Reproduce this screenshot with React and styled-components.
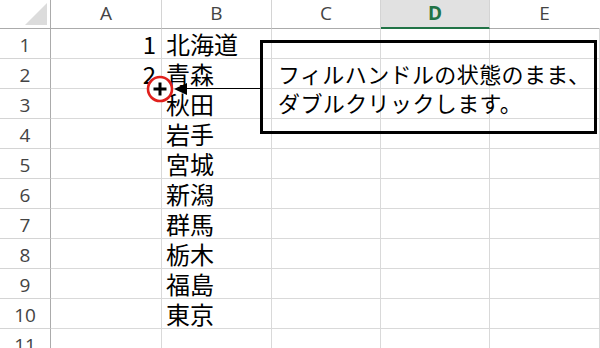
import React from 'react'
import styled, { createGlobalStyle } from 'styled-components'

const GlobalStyle = createGlobalStyle`
    html, body {
        margin: 0;
        padding: 0;
        background: #fff;
        overflow: hidden;
    }
`;

const Sheet = styled.div`
    position: relative;
    width: 600px;
    height: 348px;
    overflow: hidden;
    background: #fff;
    font-family: "Noto Sans CJK JP", sans-serif;
`;

const Grid = styled.div`
    display: grid;
    grid-template-columns: 51px 111px 110px 109px 109px 110px;
    grid-template-rows: 29px repeat(11, 30px);
`;

const Cell = styled.div`
    box-sizing: border-box;
    border-right: 1px solid #d9d9d9;
    border-bottom: 1px solid #d9d9d9;
    display: flex;
    align-items: flex-end;
    justify-content: ${p => (p.$right ? 'flex-end' : 'flex-start')};
    padding: 0 5px 0 4px;
    font-size: 24px;
    line-height: 29px;
    color: #000;
    white-space: nowrap;
    overflow: visible;
`;

const Corner = styled.div`
    position: relative;
    box-sizing: border-box;
    border-right: 1px solid #ababab;
    border-bottom: 1px solid #ababab;
    &:after {
        content: '';
        position: absolute;
        right: 3px;
        bottom: 3px;
        width: 0;
        height: 0;
        border-left: 22px solid transparent;
        border-bottom: 22px solid #dcdcdc;
    }
`;

const ColHead = styled.div`
    box-sizing: border-box;
    display: flex;
    align-items: center;
    justify-content: center;
    font-family: "Open Sans", "Liberation Sans", sans-serif;
    font-size: 19px;
    padding-bottom: 2px;
    background: ${p => (p.$active ? '#e1e1e1' : '#fff')};
    color: ${p => (p.$active ? '#217346' : '#444')};
    font-weight: ${p => (p.$active ? 700 : 400)};
    border-right: 1px solid ${p => (p.$last ? 'transparent' : '#d4d4d4')};
    border-bottom: ${p => (p.$active ? '2px solid #217346' : '1px solid #ababab')};
`;

const RowHead = styled.div`
    box-sizing: border-box;
    display: flex;
    align-items: center;
    justify-content: center;
    font-family: "Open Sans", "Liberation Sans", sans-serif;
    font-size: 19px;
    color: #444;
    padding-top: 2px;
    border-right: 1px solid #ababab;
    border-bottom: 1px solid #d4d4d4;
`;

const Callout = styled.div`
    position: absolute;
    left: 260px;
    top: 40px;
    width: 337px;
    height: 94px;
    box-sizing: border-box;
    border: 3px solid #000;
    padding: 16px 0 0 15px;
    font-size: 22px;
    line-height: 29px;
    color: #000;
    letter-spacing: 0.4px;
    white-space: nowrap;
`;

const Pointer = styled.svg`
    position: absolute;
    left: 140px;
    top: 70px;
    width: 122px;
    height: 40px;
    overflow: visible;
`;

const columns = ['A', 'B', 'C', 'D', 'E'];

const prefectures = [
    '北海道', '青森', '秋田', '岩手', '宮城',
    '新潟', '群馬', '栃木', '福島', '東京'
];

const rows = prefectures.map((name, i) => ({
    num: i + 1,
    a: i < 2 ? String(i + 1) : '',
    b: name
}));

const App = () => (
    <Sheet>
        <GlobalStyle />
        <Grid>
            <Corner />
            {columns.map((c, i) => (
                <ColHead key={c} $active={c === 'D'} $last={i === columns.length - 1}>{c}</ColHead>
            ))}
            {[...rows, { num: 11, a: '', b: '' }].map(row => (
                <React.Fragment key={row.num}>
                    <RowHead>{row.num}</RowHead>
                    <Cell $right>{row.a}</Cell>
                    <Cell>{row.b}</Cell>
                    <Cell />
                    <Cell />
                    <Cell />
                </React.Fragment>
            ))}
        </Grid>

        <Callout>
            フィルハンドルの状態のまま、<br />
            ダブルクリックします。
        </Callout>

        {/* fill handle marker and the leader line to the callout */}
        <Pointer viewBox="0 0 122 40">
            <line x1="46" y1="18.5" x2="121" y2="18.5" stroke="#000" strokeWidth="1.2" />
            <polygon points="34,19 47,13 47,25" fill="#000" />
            <circle cx="20" cy="19" r="12" fill="#fff" stroke="#e0201c" strokeWidth="2.6" />
            <line x1="13.5" y1="19" x2="26.5" y2="19" stroke="#000" strokeWidth="3" />
            <line x1="20" y1="12.5" x2="20" y2="25.5" stroke="#000" strokeWidth="3" />
        </Pointer>
    </Sheet>
);

export default App;
